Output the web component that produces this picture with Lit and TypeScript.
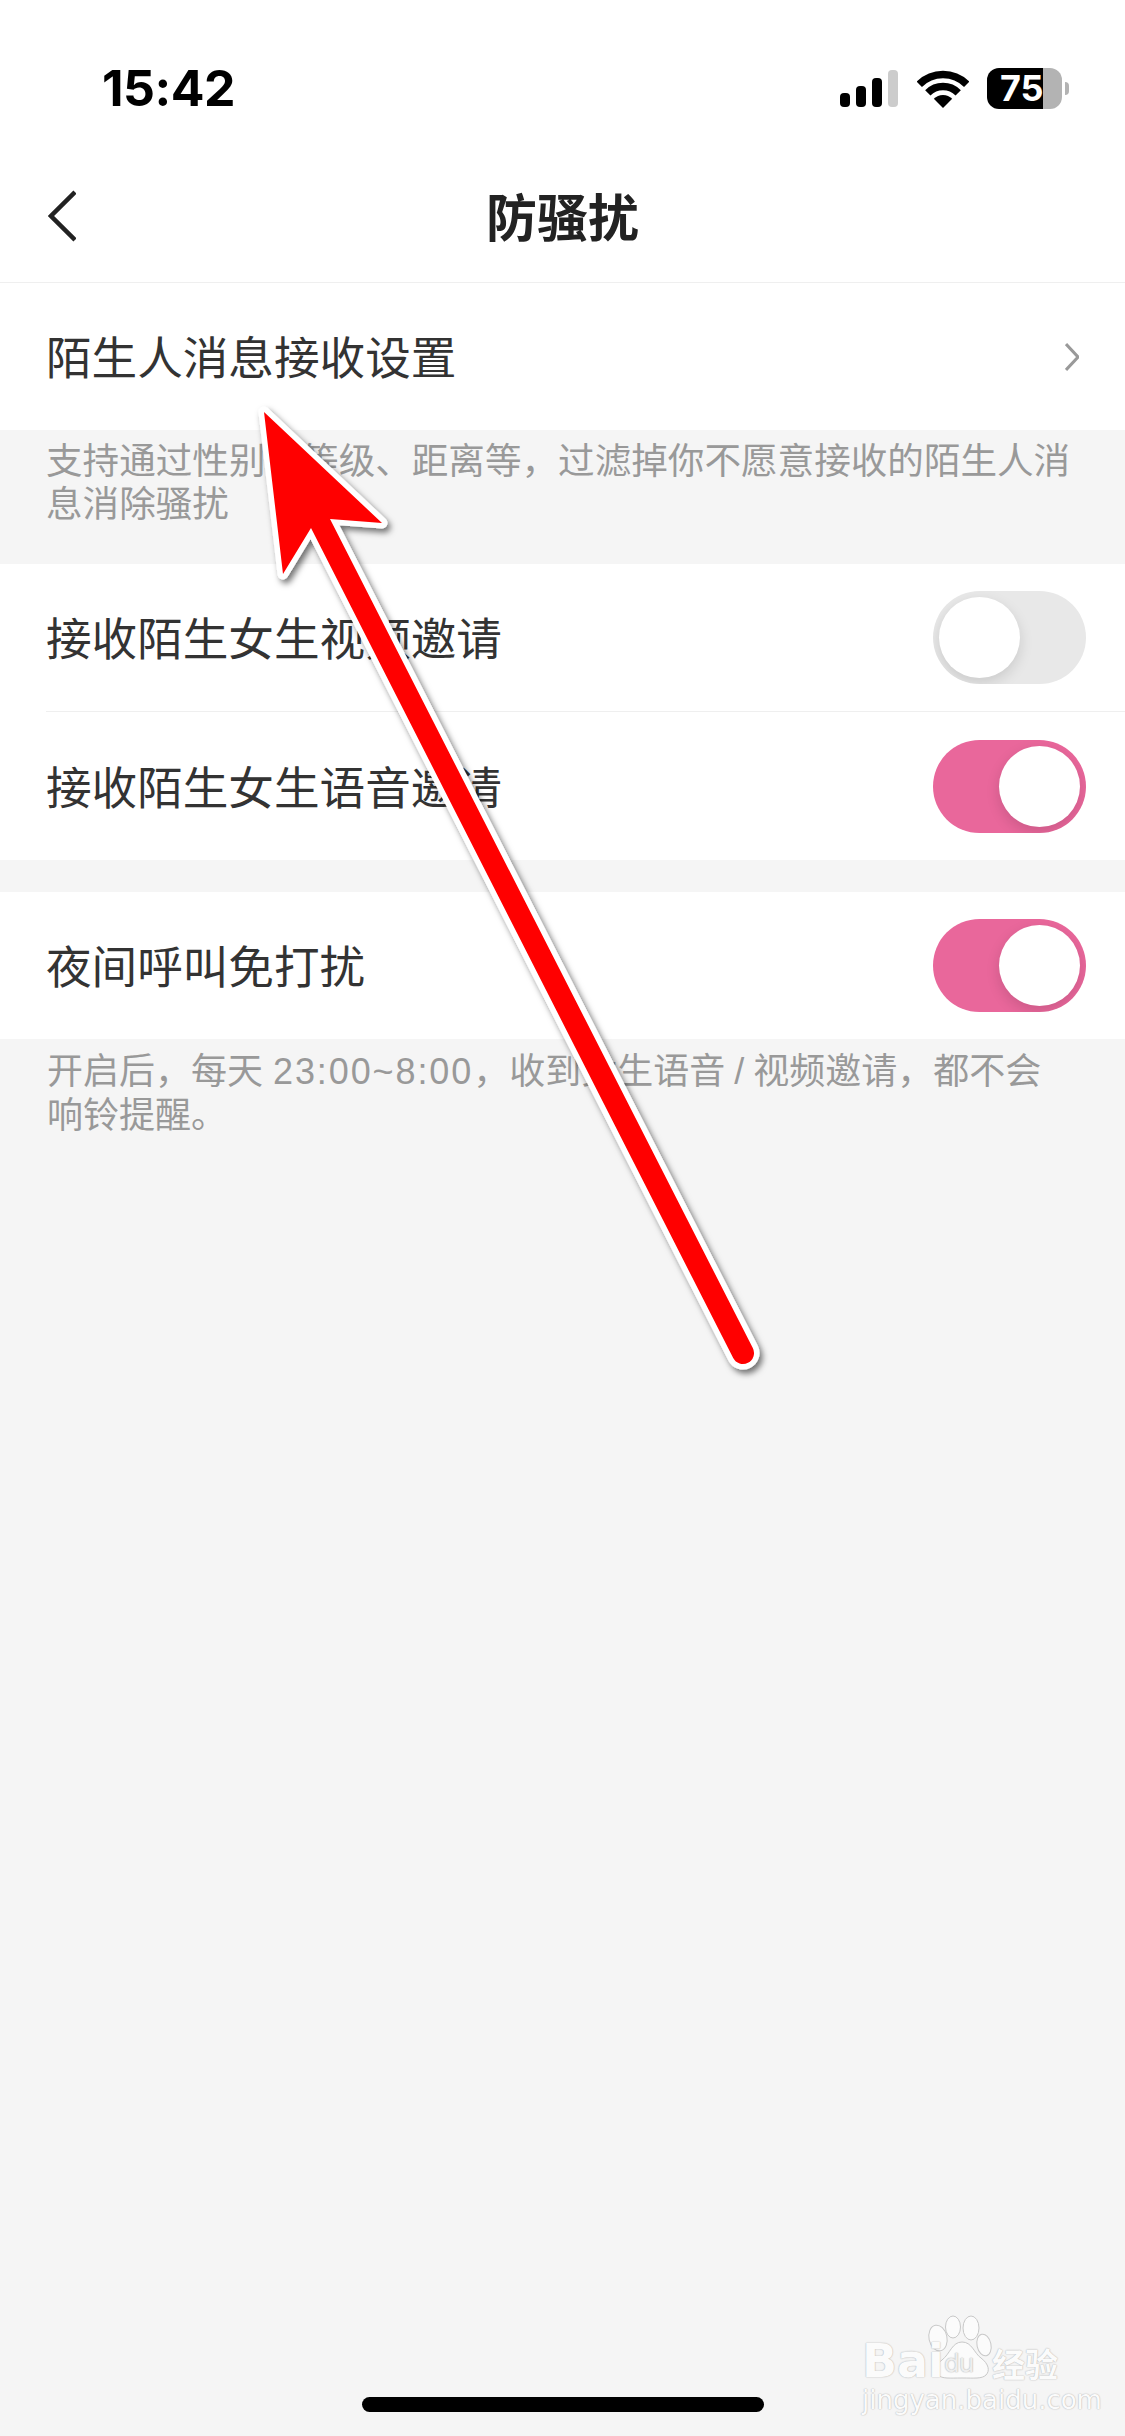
import { LitElement, html, css, svg } from "lit";
import { customElement } from "lit/decorators.js";

const toggle = (on: boolean) => html`<span class="toggle ${on ? "on" : ""}"><span class="knob"></span></span>`;

@customElement("app-root")
export class AppRoot extends LitElement {
  static styles = css`
    :host {
      display: block;
      position: relative;
      width: 1125px;
      height: 2436px;
      overflow: hidden;
      background: #f5f5f5;
      font-family: "Liberation Sans", "Noto Sans CJK SC", sans-serif;
    }
    .top { background: #fff; }
    .status {
      height: 150px;
      box-sizing: border-box;
      padding: 68px 56px 0 102px;
      display: flex;
      justify-content: space-between;
      align-items: flex-start;
    }
    .time {
      font: 700 50px/41px "Inter", "Liberation Sans", sans-serif;
      letter-spacing: -0.5px;
      color: #000;
    }
    .icons { display: flex; align-items: center; height: 41px; }
    .bars { display: flex; align-items: flex-end; gap: 6px; height: 37px; margin-right: 19px; }
    .bars i { display: block; width: 10px; border-radius: 4px; background: #000; }
    .bars i.h1 { height: 14px; }
    .bars i.h2 { height: 21px; }
    .bars i.h3 { height: 29px; }
    .bars i.h4 { height: 37px; background: #ccc; }
    .wifi { width: 52px; height: 38px; margin-right: 18px; display: block; }
    .battery {
      width: 75px;
      height: 41px;
      border-radius: 12px;
      background: linear-gradient(90deg, #000 56px, #b3b3b3 56px);
      color: #fff;
      font: 700 36px/41px "Inter", "Liberation Sans", sans-serif;
      padding-left: 13px;
      box-sizing: border-box;
    }
    .nub { width: 4px; height: 13px; margin-left: 3px; background: #b3b3b3; border-radius: 0 4px 4px 0; }
    .nav {
      height: 132px;
      border-bottom: 1px solid #efefef;
      display: grid;
      grid-template-columns: 1fr auto 1fr;
      align-items: center;
      padding-left: 48px;
      padding-right: 48px;
    }
    .back { display: block; width: 28px; height: 52px; }
    .title {
      font: 700 51px/60px "Noto Sans CJK SC", sans-serif;
      color: #222;
      position: relative;
      top: -1px;
    }
    .group { background: #fff; padding-left: 46px; }
    .row {
      height: 147px;
      display: flex;
      align-items: center;
      justify-content: space-between;
      padding: 0 39px 0 0;
      font: 400 45.6px/60px "Noto Sans CJK SC", sans-serif;
      color: #333;
    }
    .row .label { margin-bottom: 3px; }
    .row.tall { height: 148px; }
    .row.divided { border-bottom: 1px solid #efefef; }
    .chev { display: block; width: 14px; height: 28px; margin-right: 7px; }
    .note {
      margin: 0;
      padding: 10px 50px 38px 46px;
      font: 400 36.6px/43px "Liberation Sans", "Noto Sans CJK SC", sans-serif;
      color: #999;
    }
    .note.last { padding: 11px 60px 0 47px; font-size: 36px; line-height: 44px; }
    .lat { letter-spacing: 1.9px; }
    .slash { margin: 0 9px; }
    .gap { height: 32px; }
    .toggle {
      display: block;
      position: relative;
      width: 153px;
      height: 93px;
      border-radius: 47px;
      background: #e8e8e8;
      overflow: hidden;
    }
    .toggle.on { background: #e9679b; }
    .knob {
      position: absolute;
      top: 6px;
      left: 6px;
      width: 81px;
      height: 81px;
      border-radius: 50%;
      background: #fff;
      box-shadow: 0 5px 14px rgba(0, 0, 0, 0.13);
    }
    .toggle.on .knob { left: 66px; }
    .home {
      position: absolute;
      left: 362px;
      top: 2397px;
      width: 402px;
      height: 15px;
      border-radius: 8px;
      background: #000;
    }
    .arrow { position: absolute; left: 0; top: 0; width: 1125px; height: 2436px; pointer-events: none; }
    .wm { position: absolute; left: 850px; top: 2300px; width: 230px; height: 120px; }
    .wm span {
      position: absolute;
      white-space: nowrap;
      color: #fbfbfb;
      text-shadow: 0 0 1.5px #b5b5b5, 0 0 1px #c5c5c5;
    }
    .wm .bai { left: 12px; top: 38px; font: 700 46px/46px "DejaVu Sans", sans-serif; }
    .wm .du { left: 94px; top: 50px; font: 400 25px/28px "DejaVu Sans", sans-serif; color: #eee; letter-spacing: -1px; }
    .wm .jy { left: 142px; top: 43px; font: 700 33px/40px "Noto Sans CJK SC", sans-serif; }
    .wm .url { left: 12px; top: 84px; font: 400 26px/32px "DejaVu Sans", sans-serif; }
    .wm svg { position: absolute; left: 0; top: 0; }
  `;

  render() {
    return html`
      <div class="top">
        <div class="status">
          <span class="time">15:42</span>
          <div class="icons">
            <div class="bars"><i class="h1"></i><i class="h2"></i><i class="h3"></i><i class="h4"></i></div>
            <svg class="wifi" viewBox="0 0 52 38" fill="none" stroke="#000" stroke-width="7.5">
              <path d="M2.3 14.3A33.5 33.5 0 0 1 49.7 14.3" />
              <path d="M10.8 22.8A21.5 21.5 0 0 1 41.2 22.8" />
              <path d="M26 38L16.8 28.8A13 13 0 0 1 35.2 28.8Z" fill="#000" stroke="none" />
            </svg>
            <div class="battery">75</div>
            <div class="nub"></div>
          </div>
        </div>
        <div class="nav">
          <svg class="back" viewBox="0 0 28 52" fill="none" stroke="#222" stroke-width="4.5">
            <path d="M27 2L3 26L27 50" />
          </svg>
          <span class="title">防骚扰</span>
          <span></span>
        </div>
      </div>
      <div class="group">
        <div class="row">
          <span class="label">陌生人消息接收设置</span>
          <svg class="chev" viewBox="0 0 14 28" fill="none" stroke="#999" stroke-width="3"><path d="M1 1L13 14L1 27" /></svg>
        </div>
      </div>
      <p class="note">支持通过性别、等级、距离等，过滤掉你不愿意接收的陌生人消息消除骚扰</p>
      <div class="group">
        <div class="row divided"><span class="label">接收陌生女生视频邀请</span>${toggle(false)}</div>
        <div class="row tall"><span class="label">接收陌生女生语音邀请</span>${toggle(true)}</div>
      </div>
      <div class="gap"></div>
      <div class="group">
        <div class="row"><span class="label">夜间呼叫免打扰</span>${toggle(true)}</div>
      </div>
      <p class="note last">开启后，每天 <span class="lat">23:00~8:00</span>，收到女生语音<span class="slash">/</span>视频邀请，都不会响铃提醒。</p>

      <div class="wm">
        <svg width="230" height="120" viewBox="0 0 230 120" fill="#fbfbfb" stroke="#c8c8c8" stroke-width="1">
          ${svg`
            <ellipse cx="88" cy="38" rx="9" ry="13" transform="rotate(-12 88 38)" />
            <ellipse cx="103" cy="27" rx="7.5" ry="11" />
            <ellipse cx="121" cy="28" rx="8" ry="12" />
            <ellipse cx="134" cy="45" rx="7" ry="11" transform="rotate(-12 134 45)" />
            <path d="M112 42C102 42 100 54 92 60C84 66 83 72 88 75C92 79 100 78 112 78C124 78 132 79 136 75C140 71 139 64 131 58C124 53 122 42 112 42Z" />
          `}
        </svg>
        <span class="bai">Bai</span>
        <span class="du">du</span>
        <span class="jy">经验</span>
        <span class="url">jingyan.baidu.com</span>
      </div>
      <div class="home"></div>
      <svg class="arrow" viewBox="0 0 1125 2436">
        <defs>
          <filter id="s" x="-20%" y="-20%" width="140%" height="140%">
            <feDropShadow dx="3" dy="4" stdDeviation="3" flood-color="#000" flood-opacity="0.55" />
          </filter>
        </defs>
        <path
          d="M264 412L382 523L330 519L752.8 1348A11 11 0 0 1 733.2 1358L311 528L283 574Z"
          fill="#ff0000"
          stroke="#fff"
          stroke-width="11"
          stroke-linejoin="round"
          paint-order="stroke"
          filter="url(#s)"
        />
      </svg>
    `;
  }
}
